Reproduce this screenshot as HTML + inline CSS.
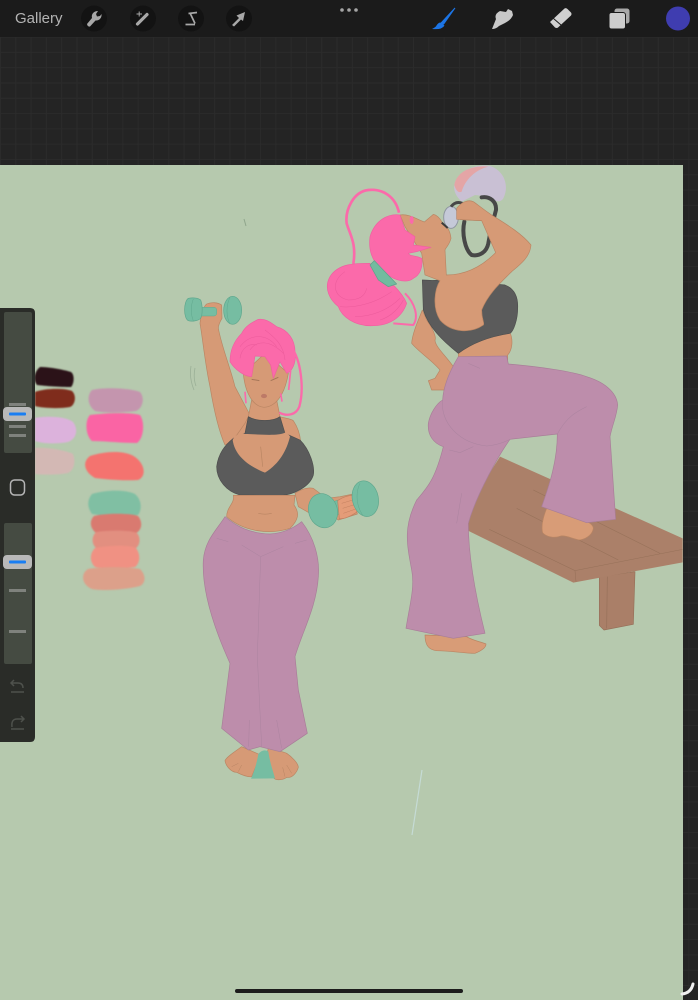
<!DOCTYPE html>
<html><head><meta charset="utf-8"><style>
html,body{margin:0;padding:0;background:#242424}
#p{position:relative;width:698px;height:1000px;overflow:hidden;background-color:#242424;background-image:linear-gradient(#2b2b2b 1px,transparent 1px),linear-gradient(90deg,#2b2b2b 1px,transparent 1px);background-size:15.3px 15.3px;background-position:0 6px}
#g{position:absolute;left:15px;top:9px;font:15px/19px "Liberation Sans",sans-serif;color:#b4b4b4}
svg{position:absolute;left:0;top:0}
.s{filter:blur(.45px)}
</style></head><body><div id="p">
<svg width="698" height="1000" viewBox="0 0 698 1000" xmlns="http://www.w3.org/2000/svg">
<rect x="0" y="0" width="698" height="37" fill="#1b1b1b"/>
<rect x="0" y="165" width="683" height="835" fill="#b6c9ae"/>

<!-- palette -->
<g class="s" style="filter:blur(.9px)">
<path d="M40,367 C50,367 65,370 71,372 C75,375 74,384 71,387 C60,387 45,386 37,385 C33,380 34,372 40,367Z" fill="#2b1218"/>
<path d="M35,392 C45,388 65,388 72,391 C77,396 75,405 70,407 C58,409 42,408 35,406Z" fill="#7f2c1c"/>
<path d="M35,418 C45,416 65,416 73,422 C79,430 76,439 68,442 C58,444 44,444 35,441Z" fill="#dcb2dc"/>
<path d="M35,448 C45,447 65,450 73,454 C76,462 74,470 68,473 C58,475 45,475 35,474Z" fill="#d3b8b4"/>
<path d="M92,390 C105,387 130,388 140,392 C145,398 143,408 136,411 C120,413 104,413 95,411 C87,405 87,395 92,390Z" fill="#c495ae"/>
<path d="M90,415 C105,413 130,412 140,415 C145,422 144,438 137,443 C120,443 105,441 92,441 C85,435 85,420 90,415Z" fill="#fa64a4"/>
<path d="M90,456 C105,451 125,450 135,457 C146,465 146,477 138,480 C120,481 105,479 95,478 C84,472 82,462 90,456Z" fill="#f4736f"/>
<path d="M92,494 C105,490 125,489 135,494 C142,500 142,510 138,515 C120,517 105,516 92,514 C87,507 87,500 92,494Z" fill="#80bfa3"/>
<path d="M94,516 C105,513 130,513 138,516 C143,522 142,530 136,533 C120,535 105,535 96,533 C89,527 90,520 94,516Z" fill="#d97a70"/>
<path d="M96,532 C110,530 130,530 137,533 C141,538 140,545 136,548 C120,550 105,550 96,548 C91,543 92,536 96,532Z" fill="#e28f80"/>
<path d="M95,548 C110,545 130,545 136,548 C141,555 140,563 135,567 C120,569 105,569 95,567 C89,561 90,553 95,548Z" fill="#f09183"/>
<path d="M88,569 C105,566 130,567 140,569 C146,575 146,583 140,586 C125,590 100,591 92,589 C82,585 80,574 88,569Z" fill="#dca08a"/>
</g>

<!-- stray strokes -->
<path d="M422,770 L412,835" stroke="#c8dedc" stroke-width="1.2" fill="none" opacity=".85"/>
<path d="M244,219 L246,226" stroke="#8fa58b" stroke-width="1" fill="none"/>
<path d="M191,366 Q189,378 194,390 M195,368 Q193,378 196,386" stroke="#9bb097" stroke-width=".8" fill="none"/>

<!-- bench + feet -->
<g class="s" transform="translate(320,160) scale(.33333)" stroke-linejoin="round">
<path d="M838,1250 L945,1235 L940,1393 L852,1410 L838,1396Z" fill="#aa7f68" stroke="#967059" stroke-width="2"/>
<path d="M862,1250 L860,1405" stroke="#967059" stroke-width="2"/>
<path d="M540,890 L1088,1135 L1088,1207 L760,1268 L440,1110 L470,1000Z" fill="#ab8069"/>
<path d="M508,1108 L765,1232 L1088,1168 M765,1232 L768,1265 M590,1045 L895,1200 M640,990 L1020,1180" stroke="#967059" stroke-width="1.600" fill="none"/>
<path d="M680,1045 L790,1080 C805,1085 820,1095 820,1105 C818,1120 805,1135 780,1140 C760,1138 740,1125 722,1128 C705,1135 680,1132 668,1118 C662,1095 672,1065 680,1045Z" fill="#d89c77" stroke="#b98563" stroke-width="2"/>
<path d="M315,1425 L440,1430 C455,1440 480,1445 498,1452 C498,1462 485,1472 465,1480 C430,1480 390,1472 350,1472 C330,1470 315,1460 315,1425Z" fill="#d89c77" stroke="#b98563" stroke-width="2"/>
</g>

<!-- upper body, right figure -->
<g class="s" transform="translate(325,160) scale(.33333)" stroke-linejoin="round">
<!-- kettlebell -->
<path d="M388,75 C395,35 450,10 495,18 C535,30 555,75 535,115 C525,130 510,125 495,110 L450,105 L410,125 C395,110 385,95 388,75Z" fill="#c9c0d4"/>
<path d="M388,75 C395,35 440,15 490,20 C450,30 420,60 410,95 C400,100 392,90 388,75Z" fill="#e4a5a6"/>
<ellipse cx="378" cy="172" rx="22" ry="33" fill="#c5c9d8" stroke="#8f96a0" stroke-width="3"/>
<path d="M418,185 C410,220 420,270 440,285 C465,290 485,275 490,250 C495,220 505,180 513,150 C515,125 495,108 470,112" fill="none" stroke="#474747" stroke-width="12" stroke-linecap="round"/>
<path d="M378,140 Q392,122 412,130" fill="none" stroke="#474747" stroke-width="9"/>
<!-- back arm -->
<path d="M292,450 C280,480 262,520 260,550 C280,575 320,600 345,630 L330,655 L310,662 L320,690 L360,690 L385,620 C365,590 330,560 330,540 C335,530 320,500 305,480Z" fill="#d69a76" stroke="#b98563" stroke-width="2"/>
<!-- midriff -->
<path d="M400,580 C440,550 500,525 555,518 C565,540 562,570 548,585 L548,610 L400,600Z" fill="#d69a76" stroke="#b98563" stroke-width="2"/>
<!-- top -->
<path d="M292,360 C320,362 340,362 350,358 L540,375 C565,385 580,405 578,445 C578,480 565,515 555,520 C490,530 440,550 400,580 C350,540 310,500 295,450Z" fill="#5b5b5b" stroke="#4d4d4d" stroke-width="2"/>
<!-- skin -->
<path d="M225,165 C250,160 280,180 298,186 L325,163 C335,165 345,175 350,185 C360,195 375,205 378,235 C372,258 360,265 360,270 L364,345 C420,345 470,320 512,278 L470,182 L395,178 L395,145 C410,125 430,118 445,125 C460,135 470,145 500,165 C540,190 590,220 618,255 C615,290 590,310 560,335 C530,365 490,400 470,450 C470,480 480,490 475,495 C440,520 380,520 345,480 C320,440 330,385 345,362 L300,345 L290,280 L240,200Z" fill="#d69a76" stroke="#b98563" stroke-width="2"/>
<path d="M405,178 C420,182 445,180 470,182" fill="none" stroke="#b98563" stroke-width="2"/>
<path d="M350,188 L368,204" stroke="#3c3c3c" stroke-width="6"/>
<ellipse cx="260" cy="180" rx="6" ry="12" fill="#fb6aaa"/>
<!-- hair -->
<path d="M222,158 C212,112 175,85 130,90 C85,95 60,150 65,190 C75,225 95,250 85,312" fill="none" stroke="#fb6aaa" stroke-width="8"/>
<path d="M135,310 C90,310 40,310 15,350 C-5,385 15,420 40,440 C50,470 90,500 145,497 C190,497 230,475 245,430 C235,405 215,385 205,375 C180,360 150,335 135,310Z" fill="#fb6aaa" stroke="#ef60a0" stroke-width="2"/>
<path d="M240,400 C270,430 282,470 265,495 L205,490" fill="none" stroke="#fb6aaa" stroke-width="6"/>
<path d="M225,165 C190,160 150,180 135,230 C130,270 140,300 170,330 C195,355 240,375 265,355 C285,345 295,320 290,295 C270,285 255,290 250,280 L275,275 L318,262 L265,255 L270,230 L240,210Z" fill="#fb6aaa" stroke="#ef60a0" stroke-width="2"/>
<path d="M135,315 L148,302 L215,372 L190,380 L160,360Z" fill="#72bb9f" stroke="#5aa389" stroke-width="2"/>
<path d="M60,335 C20,360 20,410 70,420 C100,420 120,410 125,385 M45,440 C90,445 150,430 200,395 M90,470 C140,470 190,450 225,415 M165,480 C200,470 225,440 235,420" fill="none" stroke="#ec5c9c" stroke-width="1.600"/>
</g>

<!-- pants right -->
<g class="s" transform="translate(320,160) scale(.33333)" stroke-linejoin="round">
<path d="M415,590 L560,588 L565,612 C660,620 760,635 800,650 C850,665 890,695 893,735 C890,770 878,790 870,830 L887,1078 L800,1088 L665,1040 C690,970 712,900 712,822 L570,838 C540,880 470,1000 445,1090 C445,1200 470,1320 495,1420 L400,1435 L258,1405 C270,1330 285,1280 275,1230 C260,1150 250,1100 290,1020 C320,985 345,960 370,860 C340,850 322,825 325,790 C330,760 350,730 368,720 C370,680 385,640 415,590Z" fill="#bd8dab" stroke="#a87e98" stroke-width="2"/>
<path d="M368,720 C360,790 420,850 500,858 C540,855 570,838 570,838 M712,822 C740,770 770,755 800,740 M388,870 L420,878 L460,860 M445,610 L480,625 M410,1090 L425,1000" fill="none" stroke="#ac84a0" stroke-width="1.600"/>
</g>

<!-- dumbbell figure -->
<g class="s" transform="translate(170,290) scale(.33333)" stroke-linejoin="round">
<!-- hand + arm -->
<path d="M90,100 C92,75 100,50 110,42 C125,35 145,38 155,45 L156,85 C150,95 145,105 145,115 C155,170 180,230 195,290 L240,375 L225,430 L165,465 C145,420 130,350 120,290 C105,220 100,160 90,100Z" fill="#d69a76" stroke="#b98563" stroke-width="2"/>
<!-- dumbbell top -->
<rect x="75" y="52" width="65" height="26" rx="8" fill="#76bda2" stroke="#5fa78d" stroke-width="1.500"/>
<path d="M55,25 C70,22 85,24 92,30 C98,45 98,75 92,85 C85,93 65,95 55,92 C40,85 40,35 55,25Z" fill="#76bda2" stroke="#5fa78d" stroke-width="2"/>
<path d="M70,27 C62,45 62,75 70,92" fill="none" stroke="#5fa78d" stroke-width="1.500"/>
<ellipse cx="188" cy="61" rx="27" ry="42" fill="#76bda2" stroke="#5fa78d" stroke-width="2"/>
<path d="M180,22 C168,45 168,80 180,102" fill="none" stroke="#5fa78d" stroke-width="1.500"/>
<!-- neck & shoulders -->
<path d="M245,330 L320,330 L330,380 C345,385 360,385 370,392 C382,410 390,430 392,455 L190,450 L225,400 L235,380Z" fill="#d69a76" stroke="#b98563" stroke-width="2"/>
<!-- right arm -->
<path d="M375,610 C390,600 410,590 430,595 L470,625 L510,620 L550,612 L562,672 L505,690 L470,665 L420,670 L385,650Z" fill="#d69a76" stroke="#b98563" stroke-width="2"/>
<!-- dumbbell right -->
<path d="M490,635 L560,612 L570,650 L500,675Z" fill="#76bda2" stroke="#5fa78d" stroke-width="1.500"/>
<path d="M503,632 C520,620 545,612 555,620 C565,640 565,660 558,668 C540,680 520,688 508,686Z" fill="#e49c78" stroke="#c27f5f" stroke-width="2"/>
<path d="M515,640 L555,628 M518,655 L560,642 M520,670 L560,656" stroke="#c27f5f" stroke-width="1.500"/>
<ellipse cx="586" cy="626" rx="39" ry="54" transform="rotate(-12 586 626)" fill="#76bda2" stroke="#5fa78d" stroke-width="2"/>
<path d="M570,580 C555,610 560,650 578,675" fill="none" stroke="#5fa78d" stroke-width="1.500"/>
<ellipse cx="459" cy="662" rx="43" ry="52" transform="rotate(-18 459 662)" fill="#76bda2" stroke="#5fa78d" stroke-width="2"/>
<!-- top -->
<path d="M235,380 C260,395 310,395 330,380 L345,430 L390,450 C420,480 435,530 430,555 C420,590 370,615 330,617 L210,615 C170,605 140,570 140,530 C145,490 165,465 190,445 L225,430Z" fill="#5b5b5b" stroke="#4d4d4d" stroke-width="2"/>
<path d="M188,450 C195,432 215,430 225,432 C260,432 320,440 345,428 C352,430 358,435 360,440 C350,480 330,520 285,548 C240,530 195,500 188,450Z" fill="#d69a76"/>
<path d="M272,470 L278,530" stroke="#b98563" stroke-width="2"/>
<!-- midriff -->
<path d="M190,616 L375,616 L372,645 C390,670 385,690 360,715 C300,735 220,725 170,680 C170,650 195,640 190,616Z" fill="#d69a76" stroke="#b98563" stroke-width="2"/>
<path d="M265,670 Q285,675 305,670" stroke="#b98563" stroke-width="2" fill="none"/>
<!-- feet -->
<path d="M215,1370 C195,1385 170,1400 165,1412 C168,1430 185,1447 200,1447 C215,1455 235,1462 245,1460 L272,1395 Z" fill="#d69a76" stroke="#b98563" stroke-width="2"/>
<path d="M295,1375 C310,1380 340,1385 350,1390 C365,1400 385,1420 385,1432 C380,1450 365,1465 350,1462 C340,1470 320,1472 312,1465 L290,1395Z" fill="#d69a76" stroke="#b98563" stroke-width="2"/>
<path d="M185,1430 L205,1420 M205,1445 L215,1425 M345,1460 L338,1432 M365,1450 L350,1425" stroke="#b98563" stroke-width="1.500"/>
<path d="M243,1466 C255,1440 262,1410 265,1392 Q280,1375 295,1385 C300,1420 310,1445 315,1465Z" fill="#76bda2"/>
<!-- pants -->
<path d="M165,680 C200,710 240,730 300,732 C340,730 370,715 395,695 C430,740 450,800 445,860 C440,950 395,1030 375,1100 L385,1200 L412,1330 L330,1385 L270,1370 L235,1380 L155,1315 L180,1120 C130,1010 95,900 100,810 C105,750 140,720 165,680Z" fill="#bd8dab" stroke="#a87e98" stroke-width="2"/>
<path d="M215,765 L272,800 L340,770 M272,800 L262,1100 L275,1370 M140,745 L175,755 M375,760 L410,750 M320,1290 L335,1375 M238,1290 L236,1370" fill="none" stroke="#ac84a0" stroke-width="1.500"/>
<!-- face -->
<path d="M220,250 C225,310 250,350 282,352 C320,350 345,310 355,250 L285,190Z" fill="#d69a76" stroke="#b98563" stroke-width="2"/>
<path d="M245,268 L268,272 M302,272 L325,262" stroke="#a57658" stroke-width="3"/>
<ellipse cx="282" cy="318" rx="9" ry="6.500" fill="#bd7a67"/>
<!-- hair -->
<path d="M265,88 C290,85 305,100 320,110 C355,120 375,150 375,185 C380,220 365,245 350,250 L330,215 L310,265 L302,225 L285,200 L255,198 L245,260 C225,260 195,240 180,215 C180,175 195,150 215,130 C225,110 240,100 265,88Z" fill="#fb6aaa" stroke="#ef60a0" stroke-width="2"/>
<path d="M362,170 C395,210 402,300 388,350 C378,375 352,380 328,368" fill="none" stroke="#fb6aaa" stroke-width="7"/>
<path d="M225,305 L228,340 M332,310 L336,335 M362,240 L356,300" fill="none" stroke="#fb6aaa" stroke-width="5"/>
<path d="M210,170 C240,130 290,130 320,170 M240,180 C260,150 300,150 340,190 M210,205 C215,170 240,160 260,165 M285,120 C310,140 340,160 345,210" fill="none" stroke="#ec5c9c" stroke-width="1.600"/>
</g>

<!-- sidebar -->
<path d="M0,308 H30 Q35,308 35,313 V737 Q35,742 30,742 H0Z" fill="#2a2c28"/>
<rect x="4" y="312" width="28" height="141" rx="2" fill="#454b42"/>
<rect x="4" y="523" width="28" height="141" rx="2" fill="#454b42"/>
<rect x="9" y="403" width="17" height="3" fill="#7f827d"/>
<rect x="9" y="425" width="17" height="3" fill="#7f827d"/>
<rect x="9" y="434" width="17" height="3" fill="#7f827d"/>
<rect x="3" y="407" width="29" height="14" rx="4" fill="#b9b9b9"/>
<rect x="9" y="412.500" width="17" height="3" rx="1" fill="#1a7ef2"/>
<rect x="3" y="555" width="29" height="14" rx="4" fill="#b9b9b9"/>
<rect x="9" y="560.500" width="17" height="3" rx="1" fill="#1a7ef2"/>
<rect x="9" y="589" width="17" height="3" fill="#7f827d"/>
<rect x="9" y="630" width="17" height="3" fill="#7f827d"/>
<rect x="10.500" y="480" width="14" height="15" rx="4" fill="none" stroke="#b5b5b5" stroke-width="1.500"/>
<path d="M23,688 Q23,683 18,683 H11 M14,680 L11,683 L14,686 M11,692 H24" fill="none" stroke="#4e514c" stroke-width="1.500"/>
<path d="M12,727 Q11,719 17,719 H24 M21,716 L24,719 L21,722 M11,729 H24" fill="none" stroke="#4e514c" stroke-width="1.500"/>

<!-- toolbar icons -->
<circle cx="94" cy="18.500" r="13" fill="#131313"/>
<circle cx="143" cy="18.500" r="13" fill="#131313"/>
<circle cx="191" cy="18.500" r="13" fill="#131313"/>
<circle cx="239" cy="18.500" r="13" fill="#131313"/>
<path d="M87,24 L92,18 C91,14 94,11 98,11 L96,14 L97,16.500 L100,16 L101.500,14 C102,18 99,21 95.500,20.500 L90,26.500 Q87.500,27 87,24Z" fill="#a8a8a8"/>
<path d="M137.500,24 L147,14.500" stroke="#a8a8a8" stroke-width="3.200" stroke-linecap="round"/>
<path d="M136.500,14 H142 M139.200,11.500 V16.500" stroke="#a8a8a8" stroke-width="1"/>
<path d="M188.500,13.500 L197,12.500 M190.500,14 L195,23.500 M185.500,24.500 H195" stroke="#a8a8a8" stroke-width="1.700" fill="none"/>
<path d="M232,25 L239,18 L236.500,15.500 L245,12 L243,21 L241,19.500 L234,26.500Z" fill="#a8a8a8"/>
<circle cx="342" cy="10" r="1.800" fill="#a5a5a5"/><circle cx="349" cy="10" r="1.800" fill="#a5a5a5"/><circle cx="356" cy="10" r="1.800" fill="#a5a5a5"/>
<path d="M455,8 L442,22 L441,23 L443,24.500 L444,23.500Z" fill="#1c75e6" stroke="#1c75e6" stroke-width="1"/>
<path d="M440,22.500 L444.500,25.500 Q442,30 432,29 Q436,27 436.500,25.500 Q438,23 440,22.500Z" fill="#1c75e6"/>
<path d="M492,29 L496,19 Q494,14 500,11 L506,12 L508,9 L512,11 L513,15 Q511,20 505,23 L499,26 Q496,29 492,29Z" fill="#c8c8c8"/>
<path d="M550,22 L564.500,8.500 Q566,7.500 567.500,9 L571,12.500 Q572,14 571,15.500 L558,27.500 Q557,28.500 555,27.500Z" fill="#d0d0d0"/>
<path d="M553.500,18.500 L561,25" stroke="#1b1b1b" stroke-width="1"/>
<rect x="614.500" y="8.500" width="15" height="15" rx="2.500" fill="#a9a9a9"/>
<rect x="609" y="12.500" width="16.500" height="16.500" rx="2.500" fill="#cdcdcd" stroke="#1b1b1b" stroke-width="1"/>
<circle cx="678" cy="18.500" r="12" fill="#3f3db0"/>

<!-- home bar & corner -->
<rect x="235" y="989" width="228" height="4" rx="2" fill="#1c1c1c"/>
<path d="M682,994 Q691,993 693,984" fill="none" stroke="#f0f0f0" stroke-width="3" stroke-linecap="round"/>
</svg>
<div id="g">Gallery</div>
</div></body></html>
